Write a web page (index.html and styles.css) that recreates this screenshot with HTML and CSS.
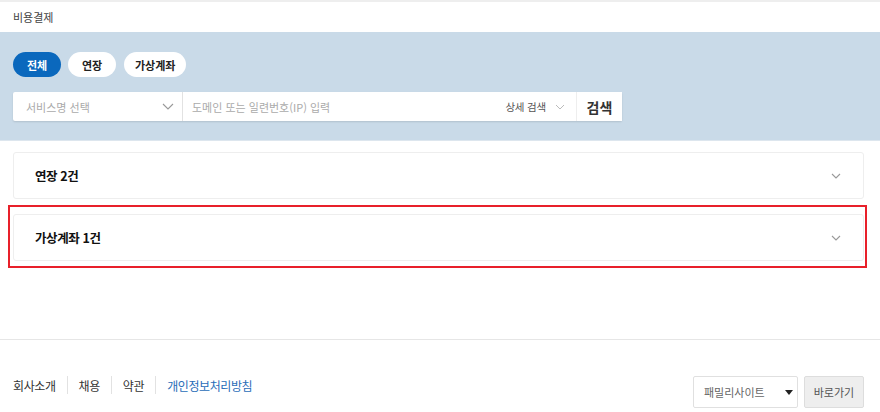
FILE: index.html
```html
<!DOCTYPE html>
<html lang="ko">
<head>
  <meta charset="UTF-8">
  <title>비용결제</title>
  <link rel="stylesheet" href="styles.css">
</head>
<body>
  <div class="page-title">비용결제</div>

  <div class="search-band">
    <div class="tabs">
      <button class="tab active">전체</button>
      <button class="tab">연장</button>
      <button class="tab">가상계좌</button>
    </div>
    <div class="search-bar">
      <div class="service-select">
        <span>서비스명 선택</span>
        <svg width="12" height="7" viewBox="0 0 12 7"><path d="M1 1l5 5 5-5" fill="none" stroke="#999" stroke-width="1.1"/></svg>
      </div>
      <div class="keyword">
        <span class="placeholder">도메인 또는 일련번호(IP) 입력</span>
        <span class="detail">상세 검색
          <svg width="10" height="6" viewBox="0 0 10 6"><path d="M1 1l4 4 4-4" fill="none" stroke="#bbb" stroke-width="1"/></svg>
        </span>
      </div>
      <button class="search-btn">검색</button>
    </div>
  </div>

  <div class="list">
    <div class="card">
      <span>연장 2건</span>
      <svg width="10" height="6" viewBox="0 0 10 6"><path d="M1 1l4 4 4-4" fill="none" stroke="#999" stroke-width="1.1"/></svg>
    </div>
    <div class="highlight">
      <div class="card">
        <span>가상계좌 1건</span>
        <svg width="10" height="6" viewBox="0 0 10 6"><path d="M1 1l4 4 4-4" fill="none" stroke="#999" stroke-width="1.1"/></svg>
      </div>
    </div>
  </div>

  <div class="footer">
    <div class="links">
      <a>회사소개</a><i></i><a>채용</a><i></i><a>약관</a><i></i><a class="privacy">개인정보처리방침</a>
    </div>
    <div class="family">
      <div class="family-select">
        <span>패밀리사이트</span>
        <svg width="8" height="5" viewBox="0 0 8 5"><path d="M0 0h8L4 5z" fill="#222"/></svg>
      </div>
      <button class="go-btn">바로가기</button>
    </div>
  </div>
</body>
</html>
```

FILE: styles.css
```css
body { margin: 0; font-family: "Noto Sans CJK KR", "Noto Sans", sans-serif; color: #333; background: #fff; width: 880px; }
button { font-family: inherit; cursor: pointer; }

.page-title { height: 30px; border-top: 2px solid #eee; padding-left: 13px; font-size: 11px; line-height: 30px; color: #444; }

.search-band { background: #c9dae8; padding: 20px 258px 19px 13px; border-bottom: 1px solid #dde6ee; height: 69px; }
.tabs { display: flex; gap: 7px; }
.tab { height: 25px; min-width: 48px; padding: 0 11px; border: none; border-radius: 13px; background: #fff; color: #222; font-size: 11px; font-weight: bold; }
.tab.active { background: #0a68bd; color: #fff; }
.tab + .tab + .tab { margin-left: 1px; }

.search-bar { display: flex; height: 29px; margin-top: 15px; background: #fff; box-shadow: 0 1px 2px rgba(0, 0, 0, 0.12); border-radius: 2px; }
.service-select { width: 170px; display: flex; align-items: center; justify-content: space-between; padding: 0 8px 0 13px; box-sizing: border-box; border-right: 1px solid #e2e2e2; font-size: 11px; color: #aaa; }
.keyword { flex: 1; display: flex; align-items: center; justify-content: space-between; padding: 0 11px 0 9px; border-right: 1px solid #eee; font-size: 11px; }
.placeholder { color: #aaa; }
.detail { color: #555; font-size: 10.5px; display: flex; align-items: center; gap: 9px; letter-spacing: -0.2px; }
.search-btn { width: 45px; border: none; background: #fff; font-size: 14px; font-weight: bold; color: #333; padding: 0; }

.list { padding: 11px 16px 0 8px; }
.card { height: 45px; margin-left: 5px; border: 1px solid #eee; border-radius: 3px; background: #fff; display: flex; align-items: center; justify-content: space-between; padding: 0 22px 0 21px; font-size: 12.5px; font-weight: bold; color: #111; letter-spacing: -0.4px; }
.highlight { margin-top: 6px; margin-right: -3px; border: 2px solid #e8202a; padding: 7px 1px 5px 0; }
.highlight .card { margin-left: 3px; }

.footer { margin-top: 71px; border-top: 1px solid #e6e6e6; display: flex; justify-content: space-between; align-items: flex-start; padding: 36px 16px 0 13px; }
.links { display: flex; align-items: center; font-size: 12px; letter-spacing: -0.4px; color: #333; }
.links i { width: 1px; height: 18px; background: #e2e2e2; margin: 0 11px; }
.links .privacy { color: #2a6db8; }
.family { display: flex; gap: 6px; }
.family-select { width: 105px; height: 32px; box-sizing: border-box; border: 1px solid #e0e0e0; border-radius: 2px; display: flex; align-items: center; justify-content: space-between; padding: 0 4px 0 10px; font-size: 11px; color: #666; }
.go-btn { width: 60px; height: 32px; border: 1px solid #ddd; border-radius: 2px; background: #eee; color: #555; font-size: 11px; padding: 0; }
```
